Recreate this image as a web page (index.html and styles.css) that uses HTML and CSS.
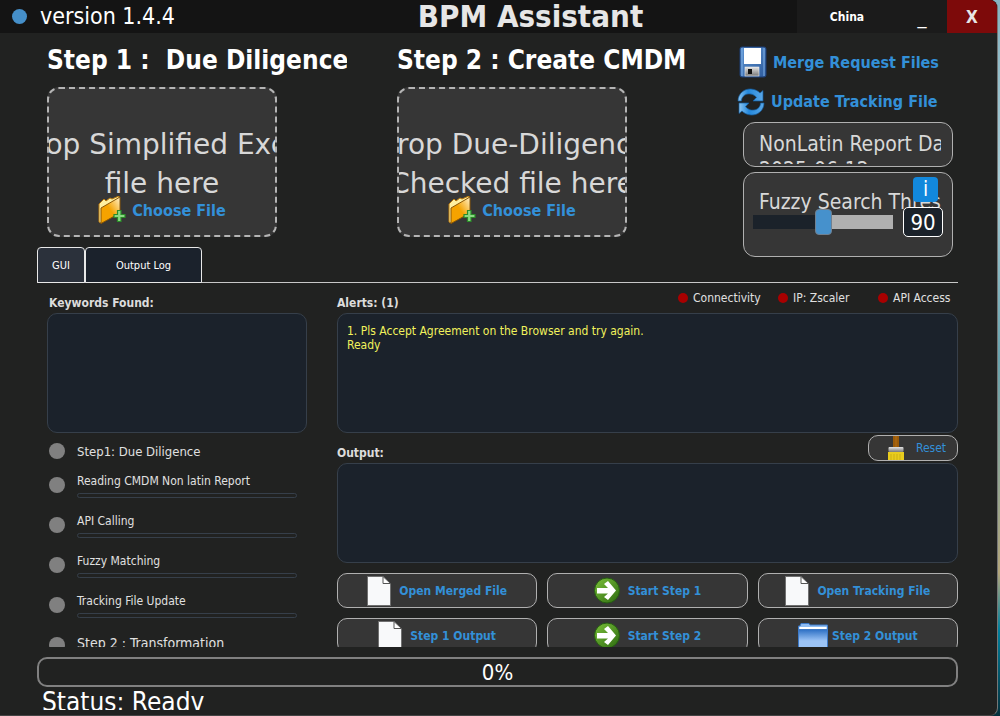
FILE: index.html
```html
<!DOCTYPE html>
<html lang="en">
<head>
<meta charset="utf-8">
<title>BPM Assistant</title>
<link rel="stylesheet" href="styles.css">
</head>
<body>
<svg class="defs" width="0" height="0" aria-hidden="true">
  <defs>
    <linearGradient id="gold" x1="0" y1="1" x2="1" y2="0"><stop offset="0.5" stop-color="#f5a300"/><stop offset="1" stop-color="#fff3d0"/></linearGradient>
    <linearGradient id="blue" x1="0" y1="0" x2="1" y2="1"><stop offset="0" stop-color="#5c93d2"/><stop offset="1" stop-color="#2f5c9c"/></linearGradient>
    <linearGradient id="green" x1="0" y1="0" x2="1" y2="1"><stop offset="0" stop-color="#7cc03a"/><stop offset="1" stop-color="#2c6a10"/></linearGradient>
    <linearGradient id="folderblue" x1="0" y1="0" x2="0" y2="1"><stop offset="0" stop-color="#2c6fc4"/><stop offset="0.6" stop-color="#9cc4f6"/></linearGradient>
    <linearGradient id="metal" x1="0" y1="0" x2="0" y2="1"><stop offset="0" stop-color="#e4e4e4"/><stop offset="1" stop-color="#777"/></linearGradient>
    <linearGradient id="cycle" x1="0" y1="0" x2="1" y2="0"><stop offset="0" stop-color="#8cc6f2"/><stop offset="0.4" stop-color="#2388dc"/><stop offset="1" stop-color="#5aa8e8"/></linearGradient>
    <symbol id="folder-add" viewBox="0 0 28 28">
      <path d="M1 8L6 3L8 5L12 2L14 3L21 0V4L3 27L1 26Z" fill="#fff0a0" stroke="#b87910" stroke-width="1"/>
      <path d="M3 12L22 1V17L3 27.500Z" fill="url(#gold)" stroke="#8a5608" stroke-width="1"/>
      <path d="M19.500 14.500H23V18.500H27V21.500H23V25.500H19.500V21.500H16V18.500H19.500Z" fill="#8bd884" stroke="#2a8c28" stroke-width="1.200"/>
    </symbol>
    <symbol id="page" viewBox="0 0 24 30">
      <path d="M0.500 0.500H16L23.500 8V29.500H0.500Z" fill="#f8f9fa" stroke="#707070"/>
      <path d="M16 0.500V7.500H23.500Z" fill="#fff" stroke="#555"/>
    </symbol>
    <symbol id="go" viewBox="0 0 26 27">
      <circle cx="13" cy="13.500" r="12.500" fill="url(#green)" stroke="#255d12"/>
      <path d="M3 11H14L10 7L14 4L22 13.500L14 23L10 20L14 16.500H3Z" fill="#fff"/>
    </symbol>
  </defs>
</svg>

<div class="window">
  <header class="titlebar">
    <div class="brand"><span class="brand-dot"></span><span>version 1.4.4</span></div>
    <h1 class="title">BPM Assistant</h1>
    <div class="controls">
      <button class="region" type="button">China</button>
      <button class="minimize" type="button" aria-label="Minimize">_</button>
      <button class="close" type="button" aria-label="Close">X</button>
    </div>
  </header>

  <main class="content">
    <section class="top">
      <div class="stage">
        <h2 class="stage-title">Step 1 :&nbsp; Due Diligence</h2>
        <div class="drop">
          <p class="drop-text">Drop Simplified Excel<br>file here</p>
          <button class="link choose" type="button"><svg width="28" height="28" aria-hidden="true"><use href="#folder-add"/></svg>Choose File</button>
        </div>
      </div>
      <div class="stage">
        <h2 class="stage-title">Step 2 : Create CMDM</h2>
        <div class="drop">
          <p class="drop-text">Drop Due-Diligence<br>Checked file here</p>
          <button class="link choose" type="button"><svg width="28" height="28" aria-hidden="true"><use href="#folder-add"/></svg>Choose File</button>
        </div>
      </div>
      <div class="side">
        <button class="link" type="button">
          <svg width="28" height="32" viewBox="0 0 28 32" aria-hidden="true">
            <rect x="1" y="1" width="26" height="30" rx="2" fill="url(#blue)" stroke="#1d3f78"/>
            <path d="M3 2V30M25 2V30" stroke="#7fb0e6"/>
            <rect x="5" y="2" width="17" height="16" fill="#fff"/>
            <rect x="6" y="21" width="14" height="9" fill="url(#metal)" stroke="#eee" stroke-width="0.600"/>
            <rect x="9" y="23" width="4" height="5" fill="#111"/>
          </svg>Merge Request Files</button>
        <button class="link update" type="button">
          <svg width="28" height="28" viewBox="0 0 28 28" aria-hidden="true">
            <g fill="url(#cycle)" stroke="#135a9c" stroke-width="0.700">
              <path d="M1 13C1 5 8 0.500 14 1C18 1.200 21 3 23 5L26 2.500V13H16L19.500 9.300C17 6.500 14 5.500 11 6C7 6.500 4.500 9.500 4.500 13Z"/>
              <path d="M27 15C27 23 20 27.500 14 27C10 26.800 7 25 5 23L2 25.500V15H12L8.500 18.700C11 21.500 14 22.500 17 22C21 21.500 23.500 18.500 23.500 15Z"/>
            </g>
          </svg>Update Tracking File</button>
        <div class="card report"><p class="card-text report-text">NonLatin Report Date:<br>2025-06-12</p></div>
        <div class="card fuzzy">
          <label class="card-text fuzzy-text" for="threshold">Fuzzy Search Threshold</label>
          <div class="fuzzy-row">
            <input class="slider" id="threshold" type="range" min="80" max="100" value="90">
            <output class="value" for="threshold">90</output>
          </div>
          <button class="info" type="button" aria-label="Information">i</button>
        </div>
      </div>
    </section>

    <nav class="tabs">
      <button class="tab active" type="button">GUI</button><button class="tab log" type="button">Output Log</button>
    </nav>

    <section class="pane">
      <div class="left">
        <h3 class="label indent">Keywords Found:</h3>
        <div class="box tall"></div>
        <ul class="steps">
          <li class="step head"><span class="dot"></span><span>Step1: Due Diligence</span></li>
          <li class="step"><span class="dot"></span><div class="task"><span>Reading CMDM Non latin Report</span><div class="bar"></div></div></li>
          <li class="step"><span class="dot"></span><div class="task"><span>API Calling</span><div class="bar"></div></div></li>
          <li class="step"><span class="dot"></span><div class="task"><span>Fuzzy Matching</span><div class="bar"></div></div></li>
          <li class="step"><span class="dot"></span><div class="task"><span>Tracking File Update</span><div class="bar"></div></div></li>
          <li class="step last"><span class="dot"></span><span class="last-text">Step 2 : Transformation</span></li>
        </ul>
      </div>
      <div class="right">
        <div class="label-row">
          <h3 class="label">Alerts: (1)</h3>
          <ul class="health"><li>Connectivity</li><li>IP: Zscaler</li><li>API Access</li></ul>
        </div>
        <div class="box tall alerts">1. Pls Accept Agreement on the Browser and try again.<br>Ready</div>
        <div class="label-row">
          <h3 class="label">Output:</h3>
          <button class="action reset" type="button">
            <svg width="16" height="24" viewBox="0 0 16 24" aria-hidden="true">
              <path d="M5 0H11V11H5Z" fill="#9a5a08"/><path d="M8 0V11" stroke="#b06c14"/>
              <rect x="0.500" y="11" width="15" height="5" rx="1" fill="url(#metal)"/>
              <rect x="0" y="16" width="16" height="8" fill="#e8cc1e"/>
              <path d="M3 18V24M6 18V24M9 18V24M12 18V24" stroke="#cdb012"/>
            </svg>Reset</button>
        </div>
        <div class="box short"></div>
        <div class="actions">
          <button class="action" type="button"><svg width="24" height="30" aria-hidden="true"><use href="#page"/></svg>Open Merged File</button>
          <button class="action" type="button"><svg width="26" height="27" aria-hidden="true"><use href="#go"/></svg>Start Step 1</button>
          <button class="action" type="button"><svg width="24" height="30" aria-hidden="true"><use href="#page"/></svg>Open Tracking File</button>
          <button class="action" type="button"><svg width="24" height="30" aria-hidden="true"><use href="#page"/></svg>Step 1 Output</button>
          <button class="action" type="button"><svg width="26" height="27" aria-hidden="true"><use href="#go"/></svg>Start Step 2</button>
          <button class="action folder" type="button">
            <svg width="30" height="26" viewBox="0 0 30 26" aria-hidden="true">
              <path d="M2 3L3 0.500H11L12 2H29.500V10H0.500V3Z" fill="#8fbcf2" stroke="#3d7ac8"/>
              <rect x="1.500" y="4" width="27" height="2" fill="#fff"/>
              <rect x="0.500" y="6.500" width="29" height="19" fill="url(#folderblue)" stroke="#3d7ac8"/>
            </svg>Step 2 Output</button>
        </div>
      </div>
    </section>

    <div class="progress" role="progressbar" aria-valuenow="0" aria-valuemin="0" aria-valuemax="100">0%</div>
    <p class="status">Status: Ready</p>
  </main>
</div>
</body>
</html>
```
FILE: styles.css
```css
* { box-sizing: border-box; }

body {
  margin: 0;
  font-family: "DejaVu Sans Condensed", "Noto Sans", sans-serif;
  font-size: 12px;
  color: #e0e0e0;
  background: linear-gradient(#86b4c2 0%, #a9cdd6 25%, #69a3ae 50%, #b4a77c 80%, #007f9c 88%, #04303c 100%);
}

h1, h2, h3, p, ul { margin: 0; padding: 0; }
ul { list-style: none; }
button { font: inherit; color: inherit; background: none; border: 0; padding: 0; cursor: pointer; }
.defs { position: absolute; }

.window {
  display: flex;
  flex-direction: column;
  height: 100vh;
  margin-right: 2px;
  overflow: hidden;
  background: #212221;
  border-right: 1px solid #777;
  border-bottom: 1px solid #444;
  border-radius: 0 8px 8px 0;
}

.titlebar {
  display: grid;
  grid-template-columns: 1fr auto 1fr;
  align-items: center;
  flex: none;
  height: 33px;
  background: #141414;
}
.brand { display: flex; align-items: center; gap: 13px; padding-left: 12px; font-size: 23px; line-height: 33px; color: #fff; }
.brand-dot { width: 15px; height: 15px; border-radius: 50%; background: #458fc9; }
.title { padding-left: 64px; font-size: 31px; line-height: 33px; color: #e6e6e6; }
.controls {
  display: grid;
  grid-template-columns: 100px 50px 50px;
  justify-self: end;
  height: 33px;
  background: #1b1b1b;
  color: #fff;
}
.region { font-size: 12px; font-weight: bold; }
.minimize { font-size: 20px; }
.close { background: #7d0a0a; font-size: 17px; font-weight: bold; color: #e6e6e6; }

.content { display: flex; flex: 1; flex-direction: column; min-height: 0; padding: 0 39px 5px 37px; }

.top { display: grid; flex: none; grid-template-columns: 300px 300px 1fr; gap: 50px; height: 214px; padding: 10px 5px 0 10px; }
.stage-title { height: 44px; overflow: hidden; font-size: 26px; line-height: 35px; white-space: nowrap; color: #fff; }
.drop {
  display: flex;
  flex-direction: column;
  align-items: center;
  width: 230px;
  height: 150px;
  padding-top: 36px;
  overflow: hidden;
  border: 2px dashed #b4b4b4;
  border-radius: 12px;
  background: #363636;
}
.drop-text { font-family: "DejaVu Sans", sans-serif; font-size: 28px; line-height: 39px; text-align: center; white-space: nowrap; color: #d8d8d8; }
.link { display: flex; align-items: center; gap: 6px; font-size: 16px; font-weight: bold; white-space: nowrap; color: #3390d8; }
.choose { margin-top: -7px; }

.side { display: flex; flex-direction: column; align-items: flex-start; min-width: 0; margin-left: -10px; }
.side .link { height: 38px; padding-left: 2px; font-size: 16px; }
.side .update { height: 41px; padding-left: 0; }
.card { position: relative; width: 210px; margin-left: 6px; border: 1px solid #b0b0b0; border-radius: 12px; background: #363636; }
.card-text { display: block; overflow: hidden; font-size: 21px; line-height: 26px; white-space: nowrap; color: #d8d8d8; }
.report { height: 45px; padding: 8px 11px 3px 15px; }
.report-text { height: 33px; }
.fuzzy { height: 85px; margin-top: 5px; padding: 16px 9px 0 9px; }
.fuzzy-text { height: 26px; margin: 0 2px 0 6px; }
.fuzzy-row { display: flex; align-items: center; justify-content: space-between; margin-top: -8px; }
.slider {
  width: 140px;
  height: 26px;
  margin: 0;
  appearance: none;
  background: linear-gradient(90deg, #1b222a 50%, #b0b0b0 50%) center / 100% 14px no-repeat;
}
.slider::-webkit-slider-thumb { appearance: none; width: 17px; height: 26px; border: 1px solid #708090; border-radius: 4px; background: #4691cc; }
.value { width: 40px; height: 30px; border: 1px solid #fff; border-radius: 5px; background: #1b222a; font-size: 22px; line-height: 30px; text-align: center; color: #fff; }
.info { position: absolute; top: 4px; right: 14px; width: 25px; height: 25px; border-radius: 4px; background: #1288dc; font-size: 21px; line-height: 25px; color: #fff; }

.tabs { display: flex; flex: none; height: 36px; background: linear-gradient(#c8c8c8, #c8c8c8) bottom / 100% 1px no-repeat; }
.tab { width: 48px; border: 1px solid #e8e8e8; border-radius: 4px 4px 0 0; background: #1b222c; font-size: 11px; color: #fff; }
.tab.active { background: #2b313b; }
.tab.log { width: 117px; }

.pane { display: grid; flex: 1; grid-template-columns: 260px 1fr; gap: 30px; min-height: 0; padding-left: 10px; overflow: hidden; }
.label { font-size: 12px; line-height: 20px; font-weight: bold; color: #dcdcdc; }
.indent { height: 30px; padding: 10px 0 0 2px; }
.box { border: 1px solid #363f4a; border-radius: 10px; background: #1b222b; }
.tall { height: 120px; }
.short { height: 100px; }
.label-row { display: flex; align-items: flex-end; justify-content: space-between; height: 30px; }
.alerts { padding: 10px 9px; font-size: 12px; line-height: 14px; color: #f2f25c; }
.health { display: grid; grid-template-columns: 100px 100px 75px; align-self: center; margin-right: 5px; }
.health li { display: flex; align-items: center; gap: 5px; white-space: nowrap; }
.health li::before { flex: none; width: 10px; height: 10px; border-radius: 50%; background: #a80000; content: ""; }

.steps { padding-top: 8px; }
.step { display: flex; align-items: center; gap: 12px; height: 40px; padding: 0 10px 0 2px; }
.head { height: 20px; margin-bottom: 4px; font-size: 13px; }
.last { font-size: 14px; }
.last-text { padding-bottom: 4px; }
.dot { flex: none; width: 16px; height: 16px; border-radius: 50%; background: #808080; }
.task { flex: 1; line-height: 16px; }
.bar { height: 5px; margin-top: 4px; border: 1px solid #363f4a; border-radius: 3px; }

.actions { display: grid; grid-template-columns: repeat(3, 1fr); gap: 10px; margin-top: 10px; }
.action {
  display: flex;
  align-items: center;
  justify-content: center;
  gap: 8px;
  height: 35px;
  border: 1px solid #b0b0b0;
  border-radius: 10px;
  background: #363636;
  font-size: 12px;
  font-weight: bold;
  white-space: nowrap;
  color: #3390d8;
}
.folder { gap: 4px; }
.reset { align-self: center; gap: 12px; width: 90px; height: 26px; padding-left: 8px; font-weight: normal; }

.progress { flex: none; height: 30px; margin-top: 10px; border: 2px solid #808080; border-radius: 10px; font-size: 22px; line-height: 28px; text-align: center; color: #fff; }
.status { flex: none; height: 23px; padding-left: 5px; overflow: hidden; font-size: 26px; line-height: 31px; color: #fff; }
```
